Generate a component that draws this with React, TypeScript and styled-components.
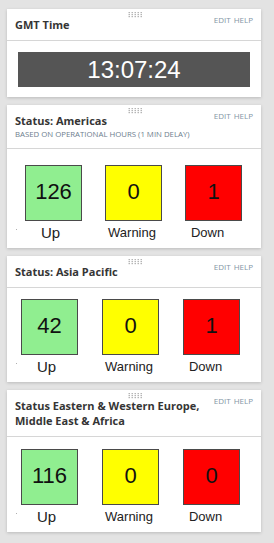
import styled, { createGlobalStyle } from 'styled-components';

const GlobalStyle = createGlobalStyle`
  html, body {
    margin: 0;
    padding: 0;
    background: #e3e3e3;
  }
  body {
    font-family: 'Open Sans', 'Liberation Sans', Arial, sans-serif;
  }
`;

type Status = { up: number; warning: number; down: number };

type Region = {
  title: string;
  subtitle?: string;
  status: Status;
  top: number;
  left: number;
  gap: number;
};

const regions: Region[] = [
  {
    title: 'Status: Americas',
    subtitle: 'Based on operational hours (1 min delay)',
    status: { up: 126, warning: 0, down: 1 },
    top: 16,
    left: 18,
    gap: 23,
  },
  {
    title: 'Status: Asia Pacific',
    status: { up: 42, warning: 0, down: 1 },
    top: 11,
    left: 14,
    gap: 24,
  },
  {
    title: 'Status Eastern & Western Europe, Middle East & Africa',
    status: { up: 116, warning: 0, down: 0 },
    top: 12,
    left: 14,
    gap: 24,
  },
];

const Page = styled.div`
  display: flex;
  flex-direction: column;
  gap: 8px;
  width: 254px;
  padding: 9px 0 9px 7px;
`;

const Card = styled.div`
  background: #ffffff;
  box-shadow: 0 1px 3px rgba(0, 0, 0, 0.18);
`;

const Header = styled.div`
  position: relative;
  display: flex;
  align-items: flex-start;
  gap: 6px;
  padding: 8px;
  border-bottom: 1px solid #d6d6d6;
`;

const Handle = styled.div`
  position: absolute;
  top: 3px;
  left: 121px;
  width: 15px;
  height: 6px;
  display: flex;
`;

const TitleBlock = styled.div`
  flex: 1;
  display: flex;
  flex-direction: column;
`;

const Title = styled.div`
  font-size: 11px;
  line-height: 15px;
  font-weight: 700;
  color: #353535;
  padding-right: 8px;
`;

const Subtitle = styled.div`
  font-size: 7.8px;
  line-height: 12px;
  color: #6e7e8e;
  text-transform: uppercase;
  white-space: nowrap;
`;

const Tools = styled.div`
  display: flex;
  gap: 3px;
  margin-top: -2px;
  font-size: 8px;
  line-height: 10px;
  color: #8495a5;
  white-space: nowrap;
`;

const ClockBody = styled.div`
  padding: 11px 11px 10px;
`;

const Clock = styled.div`
  height: 35px;
  display: flex;
  align-items: center;
  justify-content: center;
  background: #555555;
  color: #ffffff;
  font-family: 'Liberation Sans', Arial, sans-serif;
  font-size: 24px;
`;

const StatusRow = styled.div<{ $top: number; $left: number; $gap: number }>`
  position: relative;
  display: flex;
  gap: ${(p) => p.$gap}px;
  padding: ${(p) => p.$top}px 0 7px ${(p) => p.$left}px;

  &::before {
    content: '';
    position: absolute;
    left: 9px;
    bottom: 18px;
    width: 1px;
    height: 1px;
    background: #b0b0b0;
  }
`;

const TileColumn = styled.div`
  display: flex;
  flex-direction: column;
  align-items: center;
  width: 57px;
`;

const Tile = styled.div<{ $color: string }>`
  box-sizing: border-box;
  width: 57px;
  height: 56px;
  display: flex;
  align-items: center;
  justify-content: center;
  padding-bottom: 3px;
  background: ${(p) => p.$color};
  border: 1px solid #4a4a4a;
  color: #111111;
  font-family: 'Liberation Sans', Arial, sans-serif;
  font-size: 22px;
`;

const TileLabel = styled.div<{ $size: number; $shift: number }>`
  margin-top: 4px;
  padding-right: ${(p) => p.$shift}px;
  font-family: 'Liberation Sans', Arial, sans-serif;
  font-size: ${(p) => p.$size}px;
  line-height: 16px;
  color: #222222;
`;

const DragHandle = () => (
  <Handle>
    <svg width="15" height="6" viewBox="0 0 15 6">
      {[0, 1, 2].map((r) =>
        [0, 1, 2, 3, 4].map((c) => (
          <rect key={`${r}-${c}`} x={c * 3 + 0.5} y={r * 2} width="1.5" height="1.2" fill="#b5b5b5" />
        )),
      )}
    </svg>
  </Handle>
);

const PortletHeader = ({ title, subtitle }: { title: string; subtitle?: string }) => (
  <Header>
    <DragHandle />
    <TitleBlock>
      <Title>{title}</Title>
      {subtitle && <Subtitle>{subtitle}</Subtitle>}
    </TitleBlock>
    <Tools>
      <span>EDIT</span>
      <span>HELP</span>
    </Tools>
  </Header>
);

type TileProps = { value: number; label: string; color: string; size: number; shift: number };

const StatusTile = ({ value, label, color, size, shift }: TileProps) => (
  <TileColumn>
    <Tile $color={color}>{value}</Tile>
    <TileLabel $size={size} $shift={shift}>
      {label}
    </TileLabel>
  </TileColumn>
);

export default function App() {
  return (
    <>
      <GlobalStyle />
      <Page>
        <Card>
          <PortletHeader title="GMT Time" />
          <ClockBody>
            <Clock>13:07:24</Clock>
          </ClockBody>
        </Card>

        {regions.map((r) => (
          <Card key={r.title}>
            <PortletHeader title={r.title} subtitle={r.subtitle} />
            <StatusRow $top={r.top} $left={r.left} $gap={r.gap}>
              <StatusTile value={r.status.up} label="Up" color="#90ee90" size={15} shift={6} />
              <StatusTile value={r.status.warning} label="Warning" color="#ffff00" size={13} shift={3} />
              <StatusTile value={r.status.down} label="Down" color="#ff0000" size={13} shift={12} />
            </StatusRow>
          </Card>
        ))}
      </Page>
    </>
  );
}
